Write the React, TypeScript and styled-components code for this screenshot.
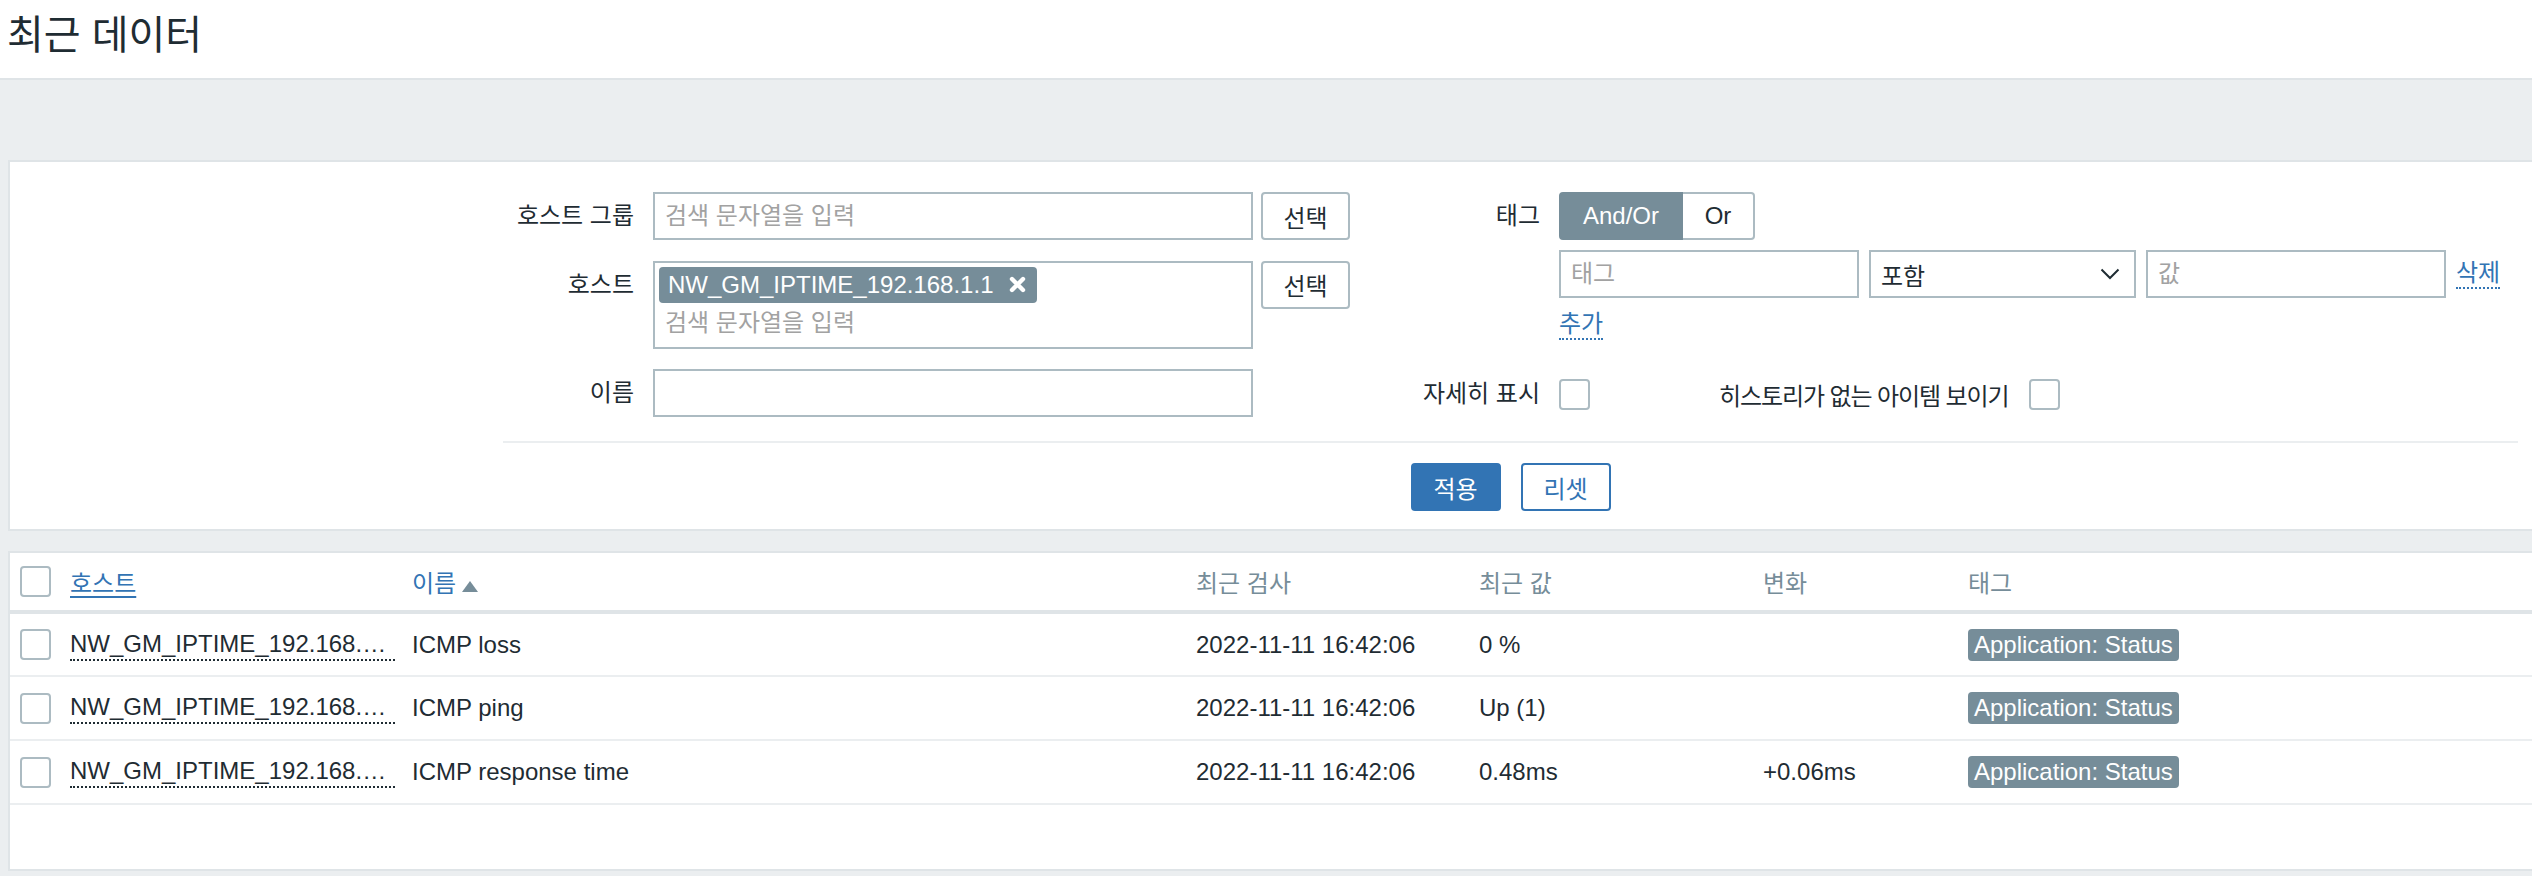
import React from "react";
import styled, { createGlobalStyle } from "styled-components";

const GlobalStyle = createGlobalStyle`
  * {
    box-sizing: border-box;
  }

  body {
    margin: 0;
    background: #ebeef0;
    color: #1f2c33;
    font-family: "Liberation Sans", Arial, "Noto Sans CJK KR", sans-serif;
    font-size: 24px;
    overflow: hidden;
  }
`;

const BLUE = "#3274b4";
const GREY = "#768d99";
const BORDER = "#acbbc2";

const HeaderStyled = styled.header`
  height: 80px;
  display: flex;
  align-items: center;
  padding-left: 7px;
  background: #fff;
  border-bottom: 2px solid #dfe4e7;
`;

const TitleStyled = styled.h1`
  margin: 0 0 14px;
  font-size: 40px;
  font-weight: normal;
  color: #1f2c33;
`;

const MainStyled = styled.main`
  padding: 80px 0 0 8px;
`;

const PanelStyled = styled.section`
  background: #fff;
  border: 2px solid #dfe4e7;
  border-right: none;
`;

const FilterPanel = styled(PanelStyled)`
  padding: 30px 0 18px;
`;

const FilterForm = styled.div`
  margin-left: 493px;
  width: 2015px;
`;

const Columns = styled.div`
  display: flex;
`;

const FormGrid = styled.div<{ $width?: number; $label: number; $rowGap: number }>`
  display: grid;
  grid-template-columns: ${(p) => p.$label}px 1fr;
  column-gap: 19px;
  row-gap: ${(p) => p.$rowGap}px;
  align-items: start;
  ${(p) => (p.$width ? `width: ${p.$width}px;` : "flex: 1;")}
`;

const Label = styled.label`
  line-height: 48px;
  text-align: right;
  white-space: nowrap;
`;

const Field = styled.div`
  display: flex;
  align-items: flex-start;
  gap: 8px;
`;

const TextInput = styled.input<{ $width: number }>`
  width: ${(p) => p.$width}px;
  height: 48px;
  padding: 0 10px;
  border: 2px solid ${BORDER};
  border-radius: 0;
  font: inherit;
  color: #1f2c33;
  outline: none;

  &::placeholder {
    color: #a2a2a2;
  }
`;

const GreyButton = styled.button`
  width: 89px;
  height: 48px;
  background: #fff;
  border: 2px solid ${BORDER};
  border-radius: 4px;
  font: inherit;
  color: #1f2c33;
`;

const MultiSelect = styled.div`
  width: 600px;
  min-height: 88px;
  padding: 4px;
  border: 2px solid ${BORDER};
`;

const Chip = styled.span`
  display: inline-flex;
  align-items: center;
  gap: 16px;
  height: 36px;
  padding: 0 11px 0 9px;
  background: ${GREY};
  border-radius: 4px;
  color: #fff;
`;

const MultiPlaceholder = styled.div`
  height: 40px;
  line-height: 40px;
  padding-left: 6px;
  color: #a2a2a2;
`;

const Segmented = styled.div`
  display: inline-flex;
  height: 48px;
`;

const SegmentButton = styled.button<{ $active?: boolean; $width: number }>`
  width: ${(p) => p.$width}px;
  height: 48px;
  font: inherit;
  background: ${(p) => (p.$active ? GREY : "#fff")};
  color: ${(p) => (p.$active ? "#fff" : "#1f2c33")};
  border: 2px solid ${(p) => (p.$active ? GREY : BORDER)};
  border-radius: ${(p) => (p.$active ? "4px 0 0 4px" : "0 4px 4px 0")};
  ${(p) => (p.$active ? "" : "border-left: none;")}
`;

const TagBlock = styled.div`
  padding-bottom: 20px;
`;

const TagRow = styled.div`
  display: flex;
  align-items: center;
  gap: 10px;
`;

const SelectBox = styled.div`
  width: 267px;
  height: 48px;
  display: flex;
  align-items: center;
  justify-content: space-between;
  padding: 0 14px 0 10px;
  border: 2px solid ${BORDER};
`;

const DottedLink = styled.a`
  display: inline-block;
  line-height: 28px;
  color: ${BLUE};
  border-bottom: 2px dotted ${BLUE};
  text-decoration: none;
  cursor: pointer;
`;

const AddLink = styled(DottedLink)`
  margin-top: 12px;
`;

const CheckRow = styled.div`
  display: flex;
  align-items: center;
  height: 48px;
`;

const CheckLabel = styled.span`
  margin: 0 21px 0 129px;
  letter-spacing: -1.1px;
`;

const Checkbox = styled.span`
  display: inline-block;
  flex: none;
  width: 31px;
  height: 31px;
  background: #fff;
  border: 2px solid ${BORDER};
  border-radius: 4px;
`;

const Divider = styled.div`
  margin-top: 23px;
  border-top: 2px solid #ebeef0;
`;

const Actions = styled.div`
  display: flex;
  justify-content: center;
  gap: 20px;
  padding-top: 20px;
`;

const ActionButton = styled.button<{ $primary?: boolean }>`
  width: 90px;
  height: 48px;
  font: inherit;
  border-radius: 4px;
  border: 2px solid ${BLUE};
  background: ${(p) => (p.$primary ? BLUE : "#fff")};
  color: ${(p) => (p.$primary ? "#fff" : BLUE)};
`;

const TablePanel = styled(PanelStyled)`
  margin-top: 20px;
  padding-bottom: 64px;
`;

const Table = styled.table`
  width: 100%;
  border-collapse: collapse;
  table-layout: fixed;
`;

const HeadCell = styled.th<{ $width?: number }>`
  ${(p) => (p.$width ? `width: ${p.$width}px;` : "")}
  height: 59px;
  padding: 0;
  text-align: left;
  font-weight: normal;
  color: ${GREY};
  border-bottom: 4px solid #dfe4e7;
  white-space: nowrap;

  &:first-child {
    padding-left: 10px;
  }
`;

const SortLink = styled.a<{ $underline?: boolean }>`
  color: ${BLUE};
  text-decoration: ${(p) => (p.$underline ? "underline" : "none")};
  text-underline-offset: 4px;
  cursor: pointer;
`;

const Row = styled.tr`
  border-bottom: 2px solid #ebeef0;
`;

const Cell = styled.td`
  height: 64px;
  padding: 0;
  white-space: nowrap;
  vertical-align: middle;

  &:first-child {
    padding-left: 10px;
  }
`;

const CheckCell = styled.span`
  display: flex;
  align-items: center;
`;

const HostName = styled.span`
  display: inline-block;
  max-width: 325px;
  overflow: hidden;
  text-overflow: ellipsis;
  white-space: nowrap;
  vertical-align: middle;
  line-height: 30px;
  border-bottom: 2px dotted #1f2c33;
`;

const TagChip = styled.span`
  display: inline-block;
  height: 32px;
  line-height: 32px;
  padding: 0 6px;
  background: ${GREY};
  color: #fff;
  border-radius: 4px;
`;

const CloseIcon = () => (
  <svg width="17" height="17" viewBox="0 0 17 17">
    <path d="M3 3 L14 14 M14 3 L3 14" stroke="#fff" strokeWidth="4.4" strokeLinecap="round" />
  </svg>
);

const ChevronIcon = () => (
  <svg width="20" height="12" viewBox="0 0 20 12">
    <path d="M1.5 1.5 L10 10 L18.5 1.5" fill="none" stroke="#1f2c33" strokeWidth="2" />
  </svg>
);

const SortUpIcon = () => (
  <svg width="16" height="11" viewBox="0 0 16 11" style={{ marginLeft: 6 }}>
    <path d="M8 0 L16 11 L0 11 Z" fill={GREY} />
  </svg>
);

const items = [
  { name: "ICMP loss", value: "0 %", change: "" },
  { name: "ICMP ping", value: "Up (1)", change: "" },
  { name: "ICMP response time", value: "0.48ms", change: "+0.06ms" },
];

const App = () => (
  <>
    <GlobalStyle />
    <HeaderStyled>
      <TitleStyled>최근 데이터</TitleStyled>
    </HeaderStyled>
    <MainStyled>
      <FilterPanel>
        <FilterForm>
          <Columns>
            <FormGrid $width={877} $label={131} $rowGap={20}>
              <Label>호스트 그룹</Label>
              <Field>
                <TextInput $width={600} placeholder="검색 문자열을 입력" />
                <GreyButton>선택</GreyButton>
              </Field>

              <Label>호스트</Label>
              <Field>
                <MultiSelect>
                  <Chip>
                    NW_GM_IPTIME_192.168.1.1
                    <CloseIcon />
                  </Chip>
                  <MultiPlaceholder>검색 문자열을 입력</MultiPlaceholder>
                </MultiSelect>
                <GreyButton>선택</GreyButton>
              </Field>

              <Label>이름</Label>
              <Field>
                <TextInput $width={600} />
              </Field>
            </FormGrid>

            <FormGrid $label={160} $rowGap={10}>
              <Label>태그</Label>
              <Segmented>
                <SegmentButton $active $width={124}>
                  And/Or
                </SegmentButton>
                <SegmentButton $width={72}>Or</SegmentButton>
              </Segmented>

              <Label />
              <TagBlock>
                <TagRow>
                  <TextInput $width={300} placeholder="태그" />
                  <SelectBox>
                    <span>포함</span>
                    <ChevronIcon />
                  </SelectBox>
                  <TextInput $width={300} placeholder="값" />
                  <DottedLink>삭제</DottedLink>
                </TagRow>
                <AddLink>추가</AddLink>
              </TagBlock>

              <Label>자세히 표시</Label>
              <CheckRow>
                <Checkbox />
                <CheckLabel>히스토리가 없는 아이템 보이기</CheckLabel>
                <Checkbox />
              </CheckRow>
            </FormGrid>
          </Columns>

          <Divider />
          <Actions>
            <ActionButton $primary>적용</ActionButton>
            <ActionButton>리셋</ActionButton>
          </Actions>
        </FilterForm>
      </FilterPanel>

      <TablePanel>
        <Table>
          <thead>
            <tr>
              <HeadCell $width={60}>
                <CheckCell>
                  <Checkbox />
                </CheckCell>
              </HeadCell>
              <HeadCell $width={342}>
                <SortLink $underline>호스트</SortLink>
              </HeadCell>
              <HeadCell $width={784}>
                <SortLink>이름</SortLink>
                <SortUpIcon />
              </HeadCell>
              <HeadCell $width={283}>최근 검사</HeadCell>
              <HeadCell $width={284}>최근 값</HeadCell>
              <HeadCell $width={205}>변화</HeadCell>
              <HeadCell>태그</HeadCell>
            </tr>
          </thead>
          <tbody>
            {items.map((item) => (
              <Row key={item.name}>
                <Cell>
                  <CheckCell>
                    <Checkbox />
                  </CheckCell>
                </Cell>
                <Cell>
                  <HostName>NW_GM_IPTIME_192.168.1.1</HostName>
                </Cell>
                <Cell>{item.name}</Cell>
                <Cell>2022-11-11 16:42:06</Cell>
                <Cell>{item.value}</Cell>
                <Cell>{item.change}</Cell>
                <Cell>
                  <TagChip>Application: Status</TagChip>
                </Cell>
              </Row>
            ))}
          </tbody>
        </Table>
      </TablePanel>
    </MainStyled>
  </>
);

export default App;
